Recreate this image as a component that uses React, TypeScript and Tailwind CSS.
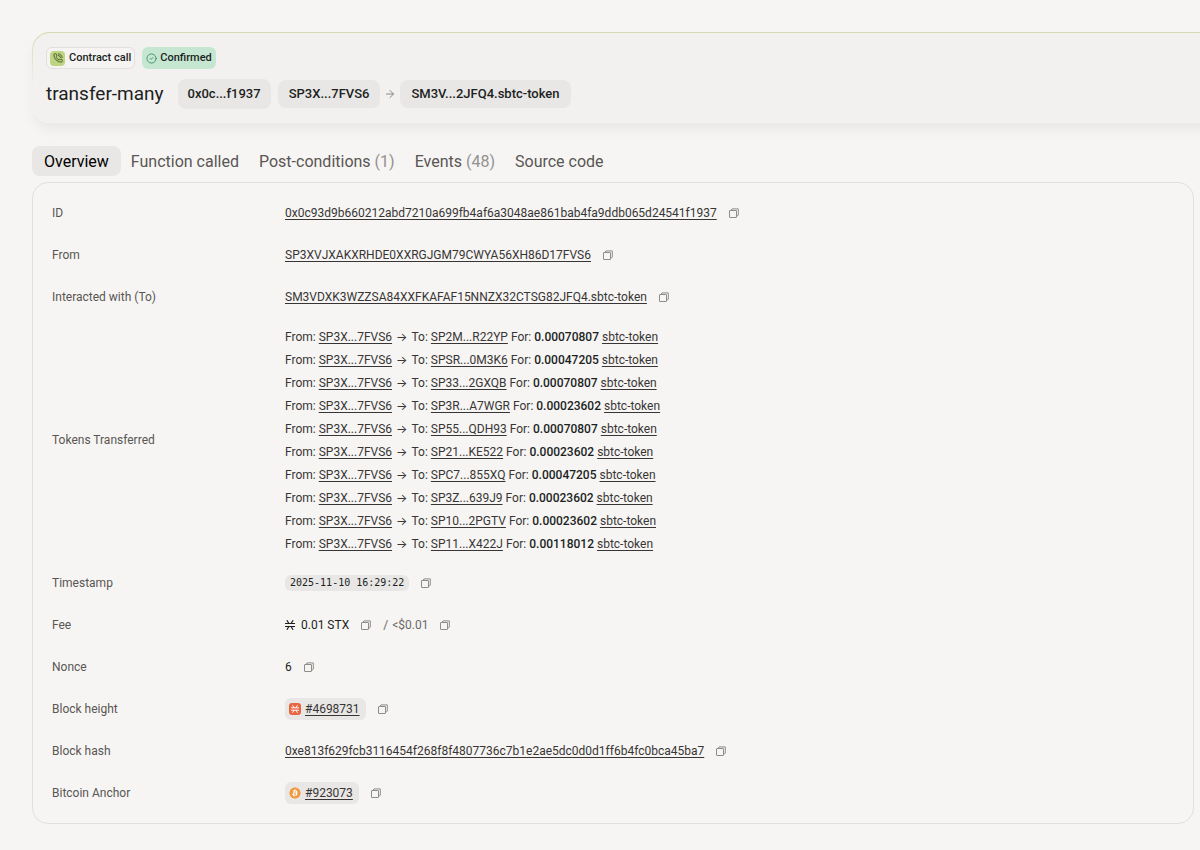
import type { ReactNode } from "react";
import { ArrowRight, CircleCheck, PhoneCall } from "lucide-react";
import { FaBitcoin } from "react-icons/fa";

type Transfer = { to: string; amount: string };

const SENDER = "SP3X...7FVS6";

const transfers: Transfer[] = [
  { to: "SP2M...R22YP", amount: "0.00070807" },
  { to: "SPSR...0M3K6", amount: "0.00047205" },
  { to: "SP33...2GXQB", amount: "0.00070807" },
  { to: "SP3R...A7WGR", amount: "0.00023602" },
  { to: "SP55...QDH93", amount: "0.00070807" },
  { to: "SP21...KE522", amount: "0.00023602" },
  { to: "SPC7...855XQ", amount: "0.00047205" },
  { to: "SP3Z...639J9", amount: "0.00023602" },
  { to: "SP10...2PGTV", amount: "0.00023602" },
  { to: "SP11...X422J", amount: "0.00118012" },
];

const tabs: { label: string; count?: number }[] = [
  { label: "Overview" },
  { label: "Function called" },
  { label: "Post-conditions", count: 1 },
  { label: "Events", count: 48 },
  { label: "Source code" },
];

function TextLink({ children }: { children: ReactNode }) {
  return (
    <a href="#" className="text-[#383534] underline decoration-1 underline-offset-2">
      {children}
    </a>
  );
}

function CopyButton({ label }: { label: string }) {
  return (
    <button type="button" aria-label={`Copy ${label}`} className="shrink-0 text-[#8f8b89]">
      <svg viewBox="0 0 10 10" className="size-2.5" fill="none" stroke="currentColor" strokeWidth="1">
        <rect x="0.5" y="2.5" width="7" height="7" rx="0.4" />
        <path d="M2 2.4L3 0.9H9.3V7.2L7.6 8.4" strokeLinejoin="round" />
      </svg>
    </button>
  );
}

function StacksMark({ className }: { className: string }) {
  return (
    <svg viewBox="0 0 20 20" className={className} fill="none" stroke="currentColor" strokeWidth="2.4" aria-hidden="true">
      <path d="M0 7h20M0 13h20M3.8 0.5l4 6.5M16.2 0.5l-4 6.5M3.8 19.5l4-6.5M16.2 19.5l-4-6.5" />
    </svg>
  );
}

function Row({ label, children }: { label: string; children: ReactNode }) {
  return (
    <tr>
      <th scope="row" className="h-[42px] w-[233px] p-0 text-left align-middle font-normal text-[#595654]">
        {label}
      </th>
      <td className="p-0 align-middle">
        <div className="flex items-center gap-3">{children}</div>
      </td>
    </tr>
  );
}

function BlockPill({ icon, children }: { icon: ReactNode; children: ReactNode }) {
  return (
    <span className="flex h-[22px] items-center gap-1 rounded-md bg-[#e8e7e5] pr-1.5 pl-1">
      {icon}
      <TextLink>{children}</TextLink>
    </span>
  );
}

function Header() {
  return (
    <header className="relative -mr-8 rounded-[18px] bg-linear-to-b from-[#d3d9b0] to-[#f2f1ef] to-60% p-px shadow-[0_8px_12px_-2px_rgba(70,60,50,0.07)]">
      <div className="flex flex-col gap-2.5 rounded-[17px] bg-[#f2f1ef] px-[13px] pt-3.5 pb-[13px]">
        <div className="flex gap-[7px] text-[11px] font-medium text-[#211f1e]">
          <span className="flex h-[22px] items-center gap-1 rounded-md border border-[#e2e0de] bg-[#f5f4f2] px-[3px]">
            <span className="flex size-[15px] items-center justify-center rounded bg-[#bdd583] text-[#3f4a1f]">
              <PhoneCall className="size-2.5" strokeWidth={2} />
            </span>
            Contract call
          </span>
          <span className="flex h-[22px] items-center gap-[3px] rounded-md bg-[#c5e7d2] px-1">
            <CircleCheck className="size-[11px] text-[#3f9162]" strokeWidth={2} />
            Confirmed
          </span>
        </div>
        <div className="flex items-center text-[13px] font-medium text-[#211f1e]">
          <h1 className="text-[19px] leading-[30px] font-normal">transfer-many</h1>
          <span className="ml-3.5 rounded-lg bg-[#e8e7e5] px-2.5 leading-[30px]">0x0c...f1937</span>
          <span className="ml-[7px] rounded-lg bg-[#e8e7e5] px-[11px] leading-[28px]">SP3X...7FVS6</span>
          <ArrowRight className="mx-1 size-3 text-[#8a8785]" strokeWidth={2} />
          <span className="rounded-lg bg-[#e8e7e5] px-[11px] leading-[28px]">SM3V...2JFQ4.sbtc-token</span>
        </div>
      </div>
    </header>
  );
}

export default function App() {
  return (
    <div className="min-h-screen overflow-x-hidden bg-[#f6f5f3] pt-8 pr-1.5 pb-6 pl-8 font-['Roboto','Inter',sans-serif] text-xs text-[#383534]">
      <Header />
      <main>
        <nav className="mt-[23px] flex" role="tablist" aria-label="Transaction details">
          {tabs.map(({ label, count }, i) => (
            <button
              key={label}
              type="button"
              role="tab"
              aria-selected={i === 0}
              className="rounded-lg px-2.5 pt-0.5 text-base leading-7 whitespace-pre text-[#595654] aria-selected:bg-[#e8e7e5] aria-selected:px-3 aria-selected:text-black"
            >
              {label}
              {count !== undefined && <span className="text-[#94918f]"> ({count})</span>}
            </button>
          ))}
        </nav>
        <section className="mt-1.5 rounded-2xl border border-[#e2e0de] px-[19px] py-[9px]">
          <table className="w-full border-collapse">
            <tbody>
              <Row label="ID">
                <TextLink>0x0c93d9b660212abd7210a699fb4af6a3048ae861bab4fa9ddb065d24541f1937</TextLink>
                <CopyButton label="ID" />
              </Row>
              <Row label="From">
                <TextLink>SP3XVJXAKXRHDE0XXRGJGM79CWYA56XH86D17FVS6</TextLink>
                <CopyButton label="sender" />
              </Row>
              <Row label="Interacted with (To)">
                <TextLink>SM3VDXK3WZZSA84XXFKAFAF15NNZX32CTSG82JFQ4.sbtc-token</TextLink>
                <CopyButton label="contract" />
              </Row>
              <Row label="Tokens Transferred">
                <ul className="py-[7px] leading-[23px]">
                  {transfers.map(({ to, amount }) => (
                    <li key={to} className="flex h-[23px] items-baseline gap-[3px]">
                      <span>From:</span>
                      <TextLink>{SENDER}</TextLink>
                      <span className="px-px font-['Inter',sans-serif]">→</span>
                      <span>To:</span>
                      <TextLink>{to}</TextLink>
                      <span>For:</span>
                      <span className="font-medium text-[#211f1e]">{amount}</span>
                      <TextLink>sbtc-token</TextLink>
                    </li>
                  ))}
                </ul>
              </Row>
              <Row label="Timestamp">
                <time className="rounded-md bg-[#e8e7e5] px-[5px] font-['DejaVu_Sans_Mono',monospace] text-[10px] leading-4 text-[#211f1e]">
                  2025-11-10 16:29:22
                </time>
                <CopyButton label="timestamp" />
              </Row>
              <Row label="Fee">
                <span className="flex items-center gap-1.5 text-[#211f1e]">
                  <StacksMark className="size-2.5" />
                  0.01 STX
                </span>
                <CopyButton label="fee in STX" />
                <span className="flex gap-1 text-[#6b6866]">
                  <span>/</span>
                  <span>&lt;$0.01</span>
                </span>
                <CopyButton label="fee in USD" />
              </Row>
              <Row label="Nonce">
                <span className="text-[#211f1e]">6</span>
                <CopyButton label="nonce" />
              </Row>
              <Row label="Block height">
                <BlockPill
                  icon={
                    <span className="flex size-3 items-center justify-center rounded-[3px] bg-[#e8663f] text-white">
                      <StacksMark className="size-2" />
                    </span>
                  }
                >
                  #4698731
                </BlockPill>
                <CopyButton label="block height" />
              </Row>
              <Row label="Block hash">
                <TextLink>0xe813f629fcb3116454f268f8f4807736c7b1e2ae5dc0d0d1ff6b4fc0bca45ba7</TextLink>
                <CopyButton label="block hash" />
              </Row>
              <Row label="Bitcoin Anchor">
                <BlockPill icon={<FaBitcoin className="size-3 rounded-full bg-white text-[#ee9a45]" />}>#923073</BlockPill>
                <CopyButton label="Bitcoin block" />
              </Row>
            </tbody>
          </table>
        </section>
      </main>
    </div>
  );
}
